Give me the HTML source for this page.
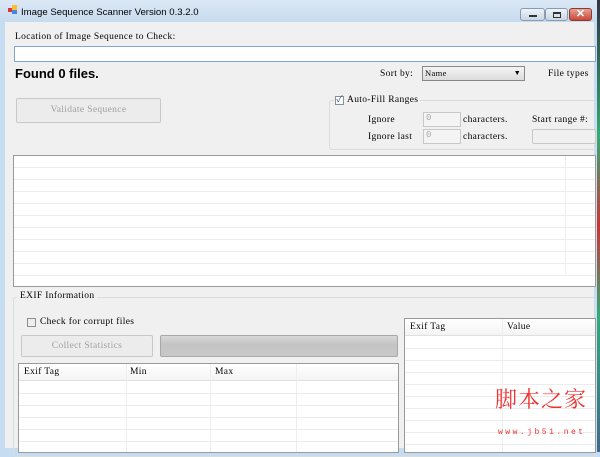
<!DOCTYPE html>
<html><head><style>
*{margin:0;padding:0;box-sizing:border-box}
body{width:600px;height:452px;overflow:hidden;background:#c6dcf0;position:relative;font-family:"Liberation Mono","Noto Sans CJK SC",monospace;font-size:9px;color:#000}
.a{position:absolute}
.t{font-family:"Liberation Serif","Noto Serif CJK SC",serif;font-size:9.5px;white-space:nowrap;letter-spacing:0.35px}
.row{position:absolute;left:0;right:0;height:1px;background:#ececec}
</style></head><body>
<div class="a" style="left:597px;top:0;width:3px;height:452px;background:linear-gradient(#334 0,#3a7 30%,#c33 50%,#3a7 70%,#468 100%)"></div>
<div class="a" style="left:0;top:0;width:597px;height:22px;background:linear-gradient(#dbe8f5,#c7dbef)"></div>
<div class="a" style="left:8px;top:8px;width:4px;height:4px;background:#d33"></div>
<div class="a" style="left:12px;top:5px;width:5px;height:5px;background:#fb3"></div>
<div class="a" style="left:12px;top:10px;width:5px;height:4px;background:#48d"></div>
<div class="a" style="left:21px;top:7px;font-family:'Liberation Sans',sans-serif;font-size:9.6px">Image Sequence Scanner Version 0.3.2.0</div>
<div class="a" style="left:520px;top:8px;width:25px;height:13px;border:1px solid #8a9bb0;border-radius:3px;background:linear-gradient(#eef3f9,#c9d6e5)"><div class="a" style="left:8px;top:6px;width:8px;height:2px;background:#333"></div></div>
<div class="a" style="left:545px;top:8px;width:23px;height:13px;border:1px solid #8a9bb0;border-radius:3px;background:linear-gradient(#eef3f9,#c9d6e5)"><div class="a" style="left:7px;top:3px;width:8px;height:6px;border:1px solid #333;border-top-width:2px"></div></div>
<div class="a" style="left:569px;top:8px;width:23px;height:13px;border:1px solid #8c3a2e;border-radius:3px;background:linear-gradient(#e8a091,#c8483a);color:#fff;font:bold 11px 'Liberation Sans';text-align:center;line-height:11px">✕</div>
<div class="a" style="left:5px;top:22px;width:589px;height:426px;background:#f0f0f0"></div>
<div class="a t" style="left:15px;top:32px">Location of Image Sequence to Check:</div>
<div class="a" style="left:14px;top:46px;width:582px;height:16px;background:#fff;border:1px solid #7fa7d0"></div>
<div class="a" style="left:15px;top:66px;font:bold 13px 'Liberation Sans',sans-serif">Found 0 files.</div>
<div class="a t" style="left:16px;top:98px;width:145px;height:25px;border:1px solid #c8c8c8;border-radius:2px;background:#ececec;color:#a0a0a0;text-align:center;line-height:23px">Validate Sequence</div>
<div class="a t" style="left:380px;top:69px">Sort by:</div>
<div class="a t" style="left:422px;top:66px;width:103px;height:15px;border:1px solid #888;background:linear-gradient(#f4f4f4,#dcdcdc);padding-left:2px;line-height:13px;font-size:8.5px">Name<span style="position:absolute;right:3px;font-size:7px">▼</span></div>
<div class="a t" style="left:548px;top:69px">File types</div>
<div class="a" style="left:329px;top:100px;width:268px;height:50px;border:1px solid #d8dde2;border-radius:3px"></div>
<div class="a" style="left:334px;top:95px;width:86px;height:10px;background:#f0f0f0"></div>
<div class="a" style="left:335px;top:96px;width:9px;height:9px;border:1px solid #8f8f8f;background:#fff;color:#2456b5;font-size:9px;line-height:7px;text-align:center">✓</div>
<div class="a t" style="left:347px;top:95px">Auto-Fill Ranges</div>
<div class="a t" style="left:368px;top:115px">Ignore</div>
<div class="a t" style="left:368px;top:132px">Ignore last</div>
<div class="a" style="left:423px;top:112px;width:38px;height:15px;border:1px solid #c8c8c8;background:#f4f4f4;color:#aaa;font-size:9px;padding-left:2px">0</div>
<div class="a" style="left:423px;top:129px;width:38px;height:15px;border:1px solid #c8c8c8;background:#f4f4f4;color:#aaa;font-size:9px;padding-left:2px">0</div>
<div class="a t" style="left:463px;top:115px">characters.</div>
<div class="a t" style="left:463px;top:132px">characters.</div>
<div class="a t" style="left:532px;top:115px">Start range #:</div>
<div class="a" style="left:532px;top:129px;width:64px;height:15px;border:1px solid #c8c8c8;background:#f0f0f0;border-radius:2px"></div>
<div class="a" style="left:13px;top:155px;width:583px;height:132px;border:1px solid #9a9a9a;background:#fff;overflow:hidden">
<div class="row" style="top:11px"></div><div class="row" style="top:23px"></div><div class="row" style="top:35px"></div><div class="row" style="top:47px"></div><div class="row" style="top:59px"></div><div class="row" style="top:71px"></div><div class="row" style="top:83px"></div><div class="row" style="top:95px"></div><div class="row" style="top:107px"></div><div class="row" style="top:119px"></div>
<div class="a" style="left:551px;top:0;width:1px;height:118px;background:#eee"></div></div>
<div class="a" style="left:13px;top:297px;width:583px;height:160px;border:1px solid #d8dde2;border-radius:3px"></div>
<div class="a t" style="left:17px;top:291px;background:#f0f0f0;padding:0 3px">EXIF Information</div>
<div class="a" style="left:27px;top:318px;width:9px;height:9px;border:1px solid #8f8f8f;background:#eee"></div>
<div class="a t" style="left:40px;top:317px">Check for corrupt files</div>
<div class="a t" style="left:21px;top:335px;width:132px;height:22px;border:1px solid #c8c8c8;border-radius:2px;background:#ececec;color:#a0a0a0;text-align:center;line-height:20px">Collect Statistics</div>
<div class="a" style="left:160px;top:335px;width:238px;height:22px;border:1px solid #a8a8a8;border-radius:2px;background:linear-gradient(#d8d8d8,#c4c4c4 40%,#c8c8c8)"></div>
<div class="a" style="left:18px;top:363px;width:381px;height:90px;border:1px solid #9a9a9a;background:#fff;overflow:hidden">
<div class="a" style="left:0;top:0;width:381px;height:17px;background:linear-gradient(#fff,#f4f4f4);border-bottom:1px solid #e0e0e0"></div>
<div class="a t" style="left:5px;top:3px">Exif Tag</div><div class="a t" style="left:111px;top:3px">Min</div><div class="a t" style="left:196px;top:3px">Max</div>
<div class="a" style="left:107px;top:0;width:1px;height:90px;background:#eee"></div><div class="a" style="left:191px;top:0;width:1px;height:90px;background:#eee"></div><div class="a" style="left:277px;top:0;width:1px;height:90px;background:#eee"></div>
<div class="row" style="top:29px"></div><div class="row" style="top:41px"></div><div class="row" style="top:53px"></div><div class="row" style="top:65px"></div><div class="row" style="top:77px"></div></div>
<div class="a" style="left:404px;top:318px;width:192px;height:135px;border:1px solid #9a9a9a;background:#fff;overflow:hidden">
<div class="a" style="left:0;top:0;width:192px;height:17px;background:linear-gradient(#fff,#f4f4f4);border-bottom:1px solid #e0e0e0"></div>
<div class="a t" style="left:5px;top:3px">Exif Tag</div><div class="a t" style="left:102px;top:3px">Value</div>
<div class="a" style="left:97px;top:0;width:1px;height:135px;background:#eee"></div>
<div class="row" style="top:29px"></div><div class="row" style="top:41px"></div><div class="row" style="top:53px"></div><div class="row" style="top:65px"></div><div class="row" style="top:77px"></div><div class="row" style="top:89px"></div><div class="row" style="top:101px"></div><div class="row" style="top:113px"></div><div class="row" style="top:125px"></div></div>
<div class="a" style="left:495px;top:384px;font-family:'Noto Serif CJK SC',serif;font-size:22px;color:#e33;letter-spacing:1px;line-height:30px">脚本之家</div>
<div class="a" style="left:498px;top:428px;font-family:'Liberation Mono',monospace;font-size:8px;color:#e33;letter-spacing:2.5px">www.jb51.net</div>
</body></html>
